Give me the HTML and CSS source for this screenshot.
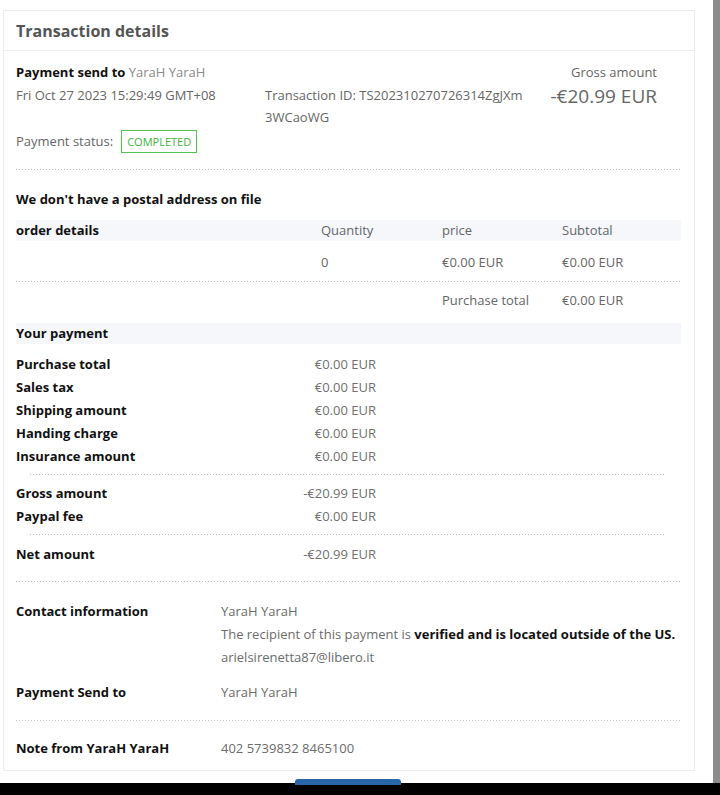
FILE: index.html
```html
<!DOCTYPE html>
<html lang="en">
<head>
<meta charset="utf-8">
<title>Transaction details</title>
<link rel="stylesheet" href="styles.css">
</head>
<body>
<div class="viewport">
  <div class="page">
    <section class="card">
      <header class="card-head"><h1>Transaction details</h1></header>

      <div class="summary">
        <div class="sum-left">
          <div class="line"><b class="dark">Payment send to</b> <span class="light">YaraH YaraH</span></div>
          <div class="line">Fri Oct 27 2023 15:29:49 GMT+08</div>
          <div class="status line">Payment status: <span class="badge">COMPLETED</span></div>
        </div>
        <div class="sum-mid">Transaction ID: TS202310270726314ZgJXm3WCaoWG</div>
        <div class="sum-right">
          <div class="line">Gross amount</div>
          <div class="big">-€20.99 EUR</div>
        </div>
      </div>

      <div class="dots"></div>

      <p class="postal">We don't have a postal address on file</p>

      <div class="order">
        <div class="order-row band">
          <b class="dark">order details</b><span>Quantity</span><span>price</span><span>Subtotal</span>
        </div>
        <div class="order-row item">
          <span></span><span>0</span><span>€0.00 EUR</span><span>€0.00 EUR</span>
        </div>
        <div class="dots"></div>
        <div class="order-row total">
          <span></span><span></span><span>Purchase total</span><span>€0.00 EUR</span>
        </div>
      </div>

      <div class="band pay-head"><b class="dark">Your payment</b></div>

      <div class="pay">
        <div class="pay-row"><b>Purchase total</b><span>€0.00 EUR</span></div>
        <div class="pay-row"><b>Sales tax</b><span>€0.00 EUR</span></div>
        <div class="pay-row"><b>Shipping amount</b><span>€0.00 EUR</span></div>
        <div class="pay-row"><b>Handing charge</b><span>€0.00 EUR</span></div>
        <div class="pay-row"><b>Insurance amount</b><span>€0.00 EUR</span></div>
      </div>
      <div class="dots inset"></div>
      <div class="pay mid">
        <div class="pay-row"><b>Gross amount</b><span>-€20.99 EUR</span></div>
        <div class="pay-row"><b>Paypal fee</b><span>€0.00 EUR</span></div>
      </div>
      <div class="dots inset"></div>
      <div class="pay net">
        <div class="pay-row"><b>Net amount</b><span>-€20.99 EUR</span></div>
      </div>

      <div class="dots"></div>

      <div class="info contact">
        <b>Contact information</b>
        <div class="info-val">
          <div class="line">YaraH YaraH</div>
          <div class="line">The recipient of this payment is <b class="dark">verified and is located outside of the US.</b></div>
          <div class="line">arielsirenetta87@libero.it</div>
        </div>
      </div>
      <div class="info sendto">
        <b>Payment Send to</b>
        <div class="info-val line">YaraH YaraH</div>
      </div>

      <div class="dots"></div>

      <div class="info note">
        <b>Note from YaraH YaraH</b>
        <div class="info-val line">402 5739832 8465100</div>
      </div>
    </section>
  </div>
  <div class="scrollbar"></div>
</div>
<footer class="taskbar"><span class="task-btn"></span></footer>
</body>
</html>
```

FILE: styles.css
```css
* { box-sizing: border-box; }
html, body { margin: 0; padding: 0; }
body {
  width: 720px;
  height: 795px;
  overflow: hidden;
  background: #fff;
  font-family: "Open Sans", "Noto Sans", sans-serif;
  font-size: 13px;
  color: #666;
}
b { font-weight: 700; color: #111; }
.dark { color: #111; }
.light { color: #8a8a8a; font-weight: 400; }

.viewport {
  display: flex;
  height: 783px;
}
.page {
  flex: 1;
  padding: 10px 0 0 3px;
}
.scrollbar {
  width: 7px;
  background: #8c8c8c;
}
.card {
  width: 692px;
  height: 761px;
  border: 1px solid #ececec;
  background: #fff;
}
.card-head {
  height: 40px;
  border-bottom: 1px solid #eeeeee;
  display: flex;
  align-items: center;
  padding-left: 12px;
}
.card-head h1 {
  margin: 0;
  font-size: 16px;
  font-weight: 700;
  color: #555;
}

.line { line-height: 23px; }

.summary {
  display: flex;
  padding: 10px 0 16px 12px;
}
.sum-left { width: 249px; }
.sum-left .status { margin-top: 23px; display: flex; align-items: center; gap: 8px; }
.badge {
  display: inline-block;
  height: 23px;
  line-height: 21px;
  padding: 0 5px;
  border: 1px solid #53c253;
  color: #3db63d;
  font-size: 11px;
}
.sum-mid {
  width: 262px;
  padding-top: 23px;
  line-height: 22px;
  word-break: break-all;
  color: #666;
}
.sum-right {
  width: 130px;
  text-align: right;
}
.big {
  font-size: 19px;
  line-height: 24px;
  color: #666;
}

.dots {
  height: 1px;
  margin: 0 14px 0 12px;
  background-image: linear-gradient(to right, #c4c4c4 1px, transparent 1px);
  background-size: 3px 1px;
}
.dots.inset { margin: 0 29px 0 26px; }

.postal {
  margin: 18px 0 9px 12px;
  line-height: 23px;
  font-weight: 700;
  color: #111;
}
.band { background: #f5f7fb; }

.order { margin: 0 13px 0 12px; }
.order .dots { margin: 0 1px 0 0; }
.order-row {
  display: grid;
  grid-template-columns: 305px 121px 120px 1fr;
}
.order-row.band { height: 21px; line-height: 21px; }
.order-row.item { line-height: 23px; padding: 10px 0 7px; }
.order-row.total { line-height: 23px; padding: 7px 0 11px; }

.pay-head {
  margin: 0 13px 0 12px;
  height: 21px;
  line-height: 21px;
}
.pay {
  width: 372px;
  padding: 9px 0 6px 12px;
}
.pay.mid { padding: 7px 0 6px 12px; }
.pay.net { padding: 8px 0 15px 12px; }
.pay-row {
  display: flex;
  justify-content: space-between;
  line-height: 23px;
}
.pay-row span { color: #707070; }

.info {
  display: grid;
  grid-template-columns: 205px 1fr;
  padding-left: 12px;
}
.info-val { color: #6b6b6b; }
.info b { line-height: 23px; }
.info.contact { padding-top: 18px; }
.info.sendto { padding: 12px 0 16px 12px; }
.info.note { padding-top: 16px; }

.taskbar {
  position: relative;
  height: 12px;
  background: #000;
}
.task-btn {
  position: absolute;
  left: 295px;
  top: -4px;
  width: 106px;
  height: 6px;
  border-radius: 3px 3px 0 0;
  background: #2766a8;
}
```
